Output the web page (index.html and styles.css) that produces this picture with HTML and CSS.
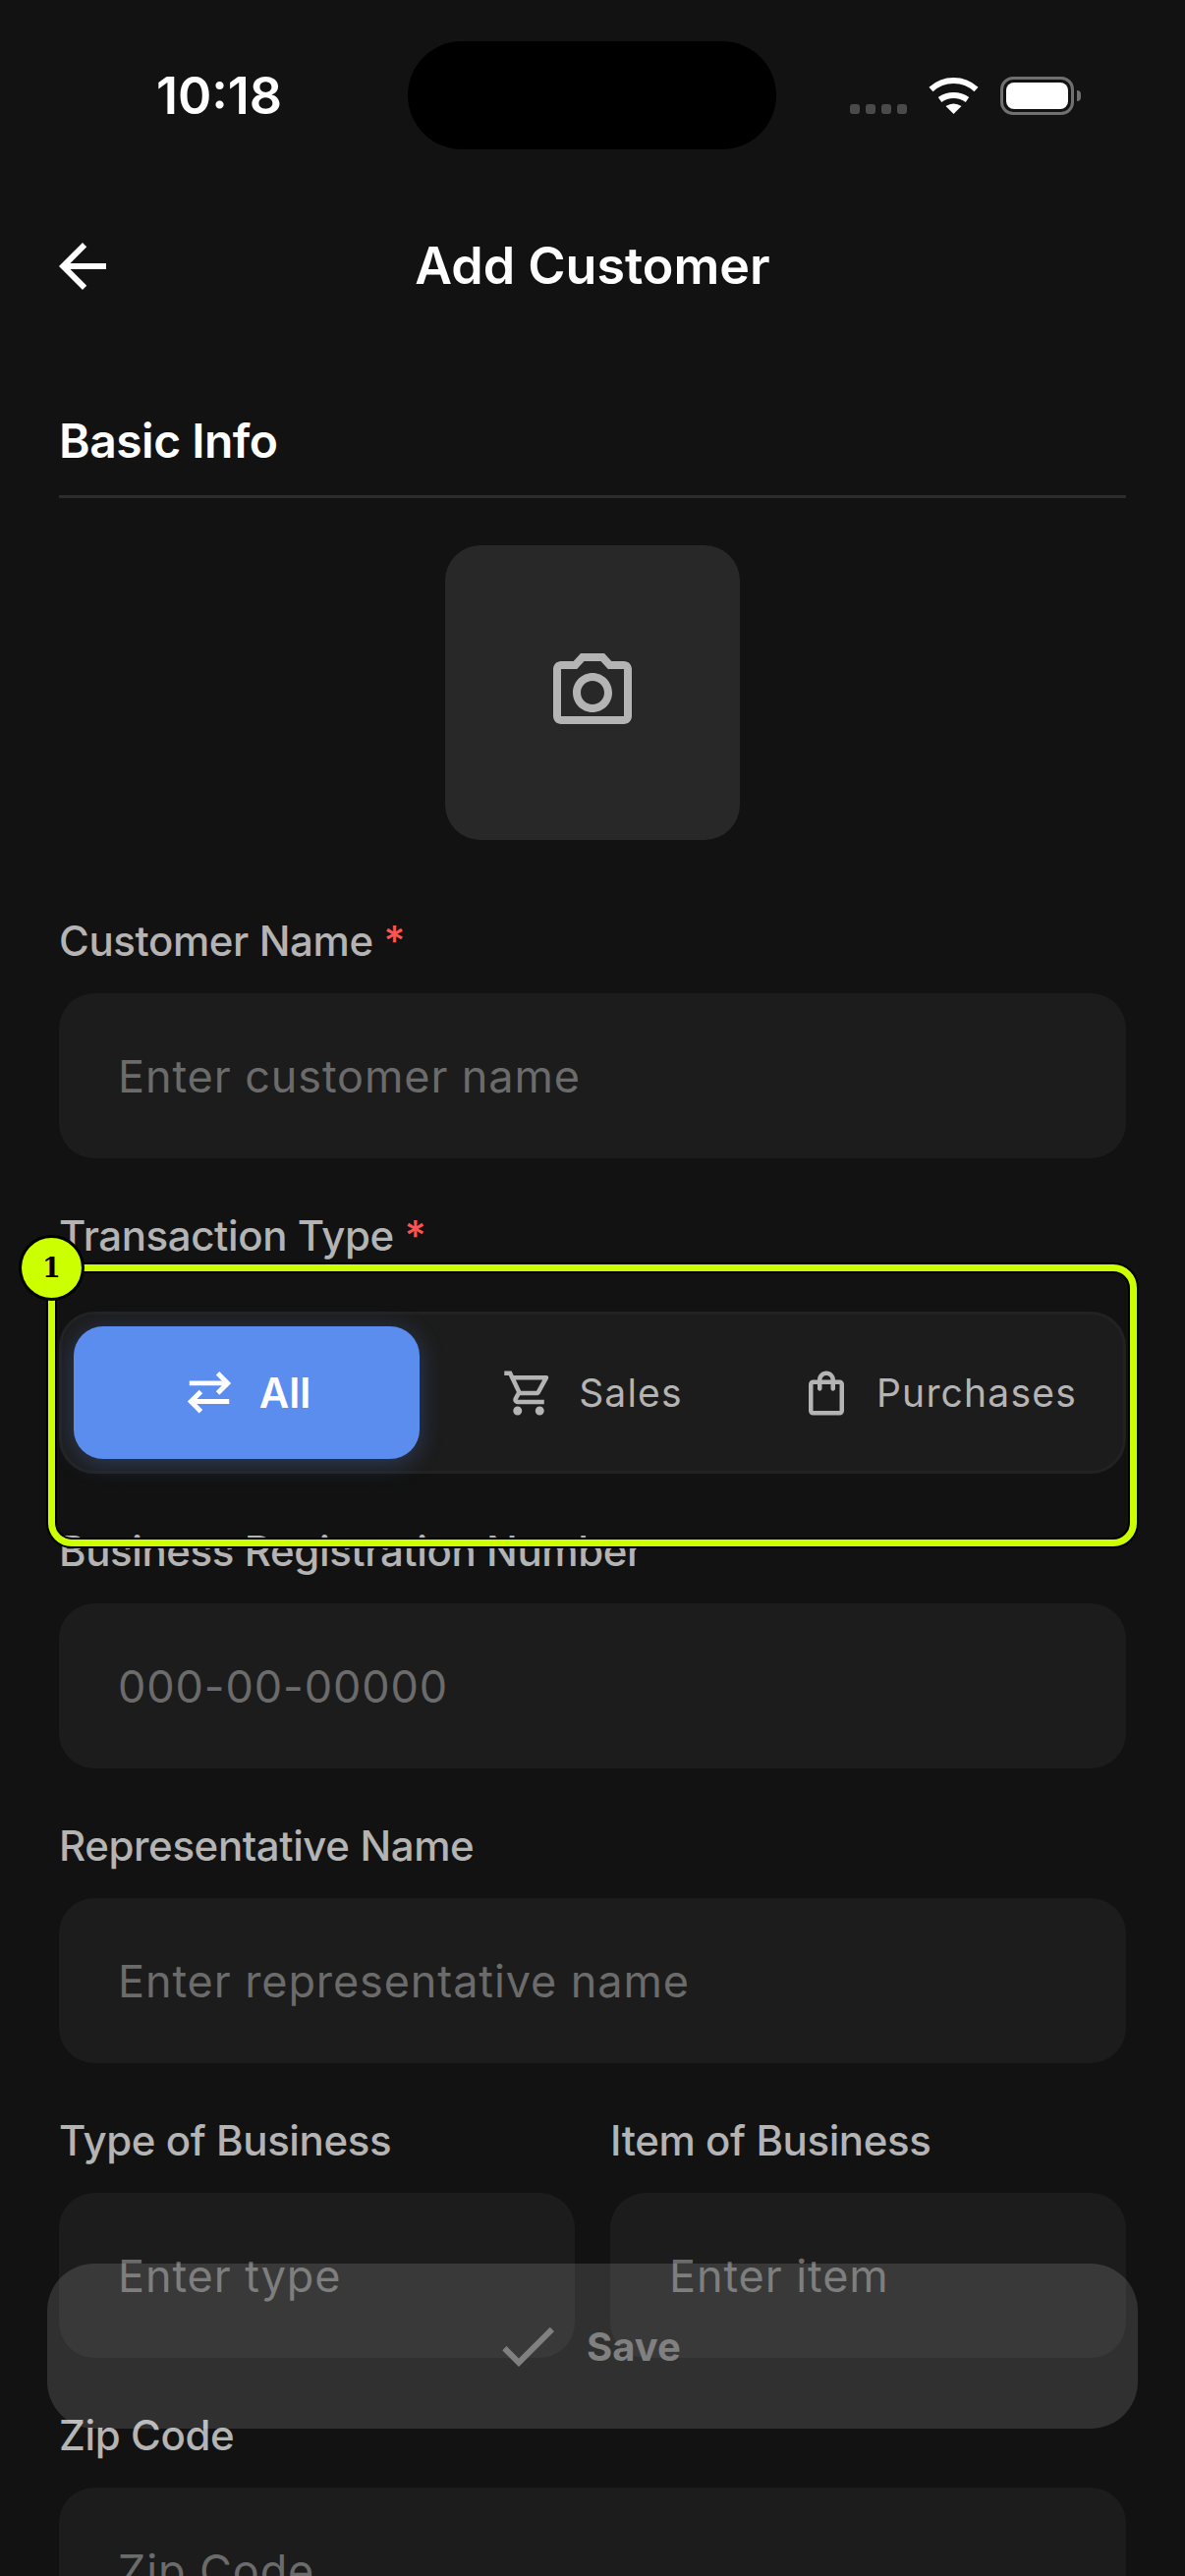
FILE: index.html
```html
<!DOCTYPE html>
<html lang="en">
<head>
<meta charset="utf-8">
<title>Add Customer</title>
<link rel="stylesheet" href="styles.css">
</head>
<body>
<div class="screen">
  <div class="status">
    <span class="time">10:18</span>
    <div class="island"></div>
    <div class="status-icons">
      <div class="signal"><i></i><i></i><i></i><i></i></div>
      <svg class="wifi" width="51" height="37" viewBox="0 0 51 37"><path d="M2.5 12A34 34 0 0 1 48.500 12" fill="none" stroke="#fff" stroke-width="6"/><path d="M11.500 22.500A24 24 0 0 1 39.500 22.500" fill="none" stroke="#fff" stroke-width="6"/><path d="M25.500 37L17.500 29Q25.500 24 33.500 29Z" fill="#fff"/></svg>
      <div class="battery"><div class="battery-fill"></div></div>
      <div class="battery-nub"></div>
    </div>
  </div>

  <header class="topbar">
    <svg class="back" width="72" height="72" viewBox="0 0 24 24"><path fill="#fff" d="M20 11H7.830l5.590-5.590L12 4l-8 8 8 8 1.410-1.410L7.830 13H20v-2z"/></svg>
    <h1 class="title">Add Customer</h1>
  </header>

  <main class="content">
    <h2 class="section">Basic Info</h2>
    <div class="photo-wrap">
      <div class="photo">
        <svg width="96" height="96" viewBox="0 0 24 24"><path fill="#b4b4b4" d="M14.120 4l1.830 2H20v12H4V6h4.050l1.830-2h4.240M15 2H9L7.170 4H4c-1.100 0-2 .9-2 2v12c0 1.100.9 2 2 2h16c1.100 0 2-.9 2-2V6c0-1.100-.9-2-2-2h-3.170L15 2zm-3 7c1.650 0 3 1.350 3 3s-1.350 3-3 3-3-1.350-3-3 1.350-3 3-3m0-2c-2.760 0-5 2.240-5 5s2.240 5 5 5 5-2.240 5-5-2.240-5-5-5z"/></svg>
      </div>
    </div>

    <div class="field">
      <div class="label">Customer Name <span class="req">*</span></div>
      <div class="input">Enter customer name</div>
    </div>

    <div class="field">
      <div class="label label-seg">Transaction Type <span class="req">*</span></div>
      <div class="segment">
        <div class="tab tab-on">
          <svg width="54" height="54" viewBox="0 0 24 24" fill="none" stroke="#fff" stroke-width="2.200"><path d="M3 7.500H19.800M15.800 3l4.500 4.500-4.500 4.500"/><path d="M21 15.800H4.200M8.200 11.300L3.700 15.800l4.500 4.500"/></svg>
          <span>All</span>
        </div>
        <div class="tab">
          <svg width="54" height="54" viewBox="0 0 24 24"><path fill="#b4b4b4" d="M15.550 13c.75 0 1.410-.41 1.750-1.030l3.580-6.490c.37-.66-.11-1.480-.87-1.480H5.210l-.94-2H1v2h2l3.600 7.590-1.350 2.440C4.520 15.370 5.480 17 7 17h12v-2H7l1.100-2h7.450zM6.160 6h12.150l-2.760 5H8.530L6.160 6zM7 18c-1.100 0-1.990.9-1.990 2S5.900 22 7 22s2-.9 2-2-.9-2-2-2zm10 0c-1.100 0-1.990.9-1.990 2s.89 2 1.990 2 2-.9 2-2-.9-2-2-2z"/></svg>
          <span>Sales</span>
        </div>
        <div class="tab">
          <svg width="54" height="54" viewBox="0 0 24 24"><path fill="#b4b4b4" d="M18 6h-2c0-2.210-1.790-4-4-4S8 3.790 8 6H6c-1.100 0-2 .9-2 2v12c0 1.100.9 2 2 2h12c1.100 0 2-.9 2-2V8c0-1.100-.9-2-2-2zm-6-2c1.100 0 2 .9 2 2h-4c0-1.100.9-2 2-2zm6 16H6V8h2v2c0 .55.45 1 1 1s1-.45 1-1V8h4v2c0 .55.45 1 1 1s1-.45 1-1V8h2v12z"/></svg>
          <span>Purchases</span>
        </div>
      </div>
    </div>

    <div class="field">
      <div class="label">Business Registration Number</div>
      <div class="input">000-00-00000</div>
    </div>

    <div class="field">
      <div class="label">Representative Name</div>
      <div class="input">Enter representative name</div>
    </div>

    <div class="row">
      <div class="field">
        <div class="label">Type of Business</div>
        <div class="input">Enter type</div>
      </div>
      <div class="field">
        <div class="label">Item of Business</div>
        <div class="input">Enter item</div>
      </div>
    </div>

    <div class="field">
      <div class="label">Zip Code</div>
      <div class="input">Zip Code</div>
    </div>
  </main>

  <div class="save">
    <svg width="72" height="72" viewBox="0 0 24 24"><path fill="#808080" d="M9 16.170L4.830 12l-1.420 1.410L9 19 21 7l-1.410-1.410z"/></svg>
    <span>Save</span>
  </div>

  <div class="highlight"><div class="badge">1</div></div>
</div>
</body>
</html>
```

FILE: styles.css
```css
* { box-sizing: border-box; }
html, body { margin: 0; padding: 0; background: #121212; }
.screen {
  position: relative;
  width: 1206px;
  height: 2622px;
  overflow: hidden;
  background: #121212;
  font-family: Inter, "Liberation Sans", sans-serif;
  color: #fff;
}
.status {
  position: relative;
  height: 229px;
  display: flex;
  align-items: flex-start;
  padding-top: 42px;
}
.time {
  position: absolute;
  left: 159px;
  top: 67px;
  font-size: 52px;
  line-height: 62px;
  font-weight: 600;
}
.island {
  width: 375px;
  height: 110px;
  margin-left: 415px;
  border-radius: 55px;
  background: #000;
}
.status-icons {
  display: flex;
  align-items: flex-start;
  margin-left: 75px;
  margin-top: 36px;
}
.signal { display: flex; gap: 6px; margin-top: 28px; }
.signal i { display: block; width: 10px; height: 10px; border-radius: 3px; background: #4a4a4a; }
.wifi { margin-left: 22px; margin-top: 1px; }
.battery {
  width: 75px;
  height: 39px;
  margin-left: 22px;
  padding: 3px;
  border: 3px solid #707070;
  border-radius: 13px;
}
.battery-fill { width: 100%; height: 100%; border-radius: 8px; background: #fff; }
.battery-nub { width: 4px; height: 11px; margin: 14px 0 0 3px; border-radius: 0 4px 4px 0; background: #707070; }

.topbar {
  position: relative;
  height: 84px;
  display: flex;
  align-items: center;
  justify-content: center;
  margin-bottom: 106px;
}
.back { position: absolute; left: 48px; top: 6px; }
.title { margin: 0; font-size: 52px; line-height: 84px; font-weight: 600; }

.content { padding: 0 60px; }
.section {
  margin: 0;
  height: 88px;
  padding-bottom: 18px;
  font-size: 48px;
  line-height: 60px;
  font-weight: 600;
  letter-spacing: -.5px;
  border-bottom: 3px solid #2c2c2c;
}
.photo-wrap { display: flex; justify-content: center; margin-top: 48px; margin-bottom: 24px; }
.photo {
  width: 300px;
  height: 300px;
  border-radius: 36px;
  background: #282828;
  display: flex;
  align-items: center;
  justify-content: center;
}
.field { padding-top: 60px; flex: 1; min-width: 0; }
.label {
  height: 38px;
  line-height: 38px;
  margin-bottom: 34px;
  font-size: 42px;
  font-weight: 500;
  letter-spacing: -.4px;
  color: #b4b4b4;
  white-space: nowrap;
}
.label-seg { margin-bottom: 58px; }
.req { color: #ff5252; }
.input {
  height: 168px;
  padding-left: 60px;
  border-radius: 36px;
  background: #1c1c1c;
  display: flex;
  align-items: center;
  font-size: 45px;
  letter-spacing: .9px;
  color: #6b6b6b;
}
.row { display: flex; gap: 36px; }
.segment {
  display: flex;
  height: 165px;
  padding: 12px;
  border: 3px solid #222;
  border-radius: 36px;
  background: #1c1c1c;
}
.tab {
  flex: 1;
  display: flex;
  align-items: center;
  justify-content: center;
  gap: 24px;
  font-size: 39px;
  letter-spacing: 1.2px;
  color: #b4b4b4;
}
.tab-on {
  border-radius: 30px;
  background: #5b8def;
  color: #fff;
  font-size: 42px;
  letter-spacing: 0;
  font-weight: 600;
  box-shadow: 0 4px 24px rgba(91, 141, 239, .3);
}
.save {
  position: absolute;
  left: 48px;
  top: 2304px;
  width: 1110px;
  height: 168px;
  border-radius: 48px;
  background: rgba(255, 255, 255, .13);
  display: flex;
  align-items: center;
  justify-content: center;
  gap: 24px;
  padding-right: 12px;
  font-size: 40px;
  font-weight: 700;
  color: #808080;
}
.highlight {
  position: absolute;
  left: 49px;
  top: 1287px;
  width: 1108px;
  height: 287px;
  border: 7px solid #ccff00;
  border-radius: 24px;
  box-shadow: 0 0 0 2px #000, inset 0 0 0 2px #000;
}
.badge {
  position: absolute;
  left: -34px;
  top: -34px;
  width: 61px;
  height: 61px;
  border-radius: 50%;
  background: #ccff00;
  box-shadow: 0 0 0 3px #000;
  color: #000;
  font-family: "DejaVu Serif", serif;
  font-weight: 700;
  font-size: 27px;
  line-height: 61px;
  text-align: center;
}
```
